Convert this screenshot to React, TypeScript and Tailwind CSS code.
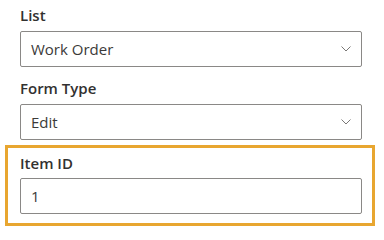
import { ReactNode } from 'react';

function Chevron() {
  return (
    <svg width="10" height="6" viewBox="0 0 10 6" fill="none" className="shrink-0">
      <path d="M0.5 0.5 L5 5 L9.5 0.5" stroke="#7a7876" strokeWidth="1" />
    </svg>
  );
}

function Label({ children, h = 'h-[31px]' }: { children: ReactNode; h?: string }) {
  return (
    <div className={`${h} flex items-center text-[15px] font-semibold text-[#323130]`}>
      {children}
    </div>
  );
}

function Box({ value, dropdown }: { value: string; dropdown?: boolean }) {
  return (
    <div className="h-[36px] w-[342px] border border-[#8a8886] rounded-[2px] bg-white flex items-center pl-[10px] pr-[10px]">
      <span className="flex-1 text-[15px] text-[#3b3a39]">{value}</span>
      {dropdown && <Chevron />}
    </div>
  );
}

export default function App() {
  return (
    <div
      className="w-[384px] h-[237px] bg-white overflow-hidden"
      style={{ fontFamily: '"Open Sans", "Noto Sans", sans-serif' }}
    >
      <div className="pl-[20px]">
        <Label>List</Label>
        <Box value="Work Order" dropdown />
        <div className="mt-[6px]">
          <Label>Form Type</Label>
          <Box value="Edit" dropdown />
        </div>
      </div>

      {/* highlighted field */}
      <div className="mt-[5px] ml-[5px] w-[370px] border-[3px] border-[#e8a630] pl-[12px] pr-[10px] pb-[9px]">
        <Label h="h-[30px]">Item ID</Label>
        <Box value="1" />
      </div>
    </div>
  );
}
